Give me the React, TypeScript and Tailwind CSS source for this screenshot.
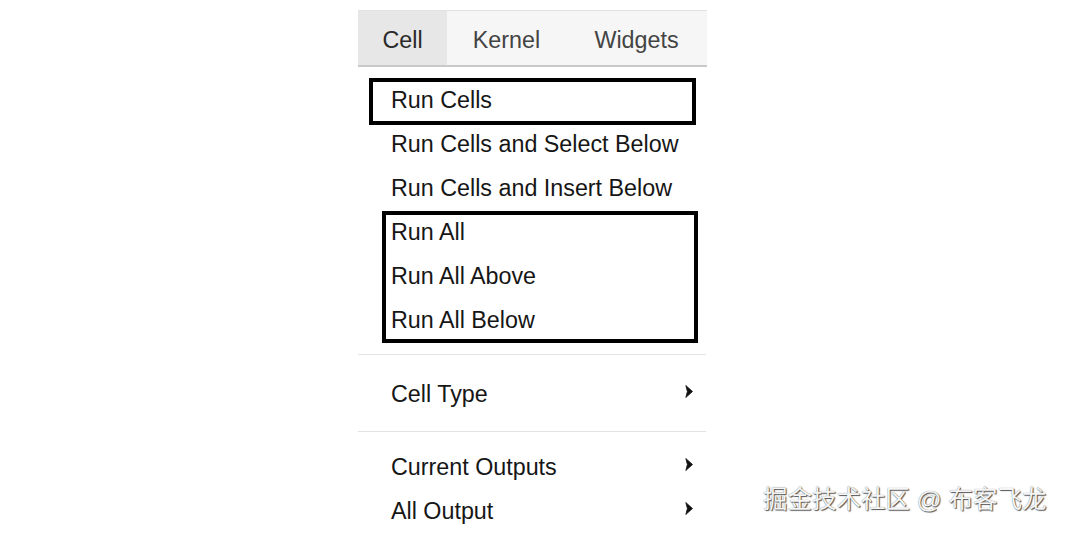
import React from 'react';

const FONT = { fontFamily: '"Liberation Sans", Arial, sans-serif' };

function Caret() {
  return (
    <svg width="8" height="13" viewBox="0 0 8 13" className="shrink-0 -mt-[5px]">
      <path d="M0.8 0.5 L7.5 6.5 L0.8 12.5 L2.4 6.5 Z" fill="#111" stroke="#111" strokeWidth="0.8" strokeLinejoin="round" />
    </svg>
  );
}

function Item({ label, sub, className = '' }: { label: string; sub?: boolean; className?: string }) {
  return (
    <div className={`h-[44px] flex items-center justify-between pl-[33px] pr-[14px] ${className}`}>
      <span>{label}</span>
      {sub && <Caret />}
    </div>
  );
}

export default function App() {
  return (
    <div className="w-[1066px] h-[534px] bg-white flex overflow-hidden text-[23.3px] text-[#161616]" style={FONT}>
      <div className="ml-[358px] mt-[10px] w-[349px] shrink-0 flex flex-col">
        {/* menu bar */}
        <div className="h-[57px] flex border-t border-[#e2e2e2] border-b-2 border-b-[#c9c9c9] bg-[#f6f6f6]">
          <div className="w-[89px] bg-[#e7e7e7] flex items-center justify-center pt-[4px] text-[#2a2a2a]">Cell</div>
          <div className="w-[119px] flex items-center justify-center pt-[4px] text-[#444]">Kernel</div>
          <div className="w-[141px] flex items-center justify-center pt-[4px] text-[#444]">Widgets</div>
        </div>

        <div className="pt-[11px]">
          <div className="ml-[11px] w-[327px] h-[47px] border-4 border-black flex items-center pl-[18px] pb-[3px]">
            Run Cells
          </div>
          <Item label="Run Cells and Select Below" className="-mt-[3px]" />
          <Item label="Run Cells and Insert Below" />
          <div className="mt-[1px] ml-[24px] w-[316px] h-[132px] border-4 border-black">
            <div className="-mt-[5px]">
              <div className="h-[44px] flex items-center pl-[5px]">Run All</div>
              <div className="h-[44px] flex items-center pl-[5px]">Run All Above</div>
              <div className="h-[44px] flex items-center pl-[5px]">Run All Below</div>
            </div>
          </div>
        </div>

        <div className="mt-[11px] h-px w-[348px] bg-[#e3e3e3]" />
        <Item label="Cell Type" sub className="mt-[17px]" />
        <div className="mt-[15px] h-px w-[348px] bg-[#e3e3e3]" />
        <Item label="Current Outputs" sub className="mt-[13px]" />
        <Item label="All Output" sub />
      </div>

      <div
        className="self-end ml-[56px] mb-[17px] text-[24.5px] leading-[34px] whitespace-nowrap text-[#f5f5f5] [text-shadow:1px_1px_1px_rgba(0,0,0,0.65),0_0_1px_rgba(0,0,0,0.55)]"
        style={{ fontFamily: '"Liberation Sans", "Noto Sans CJK SC", sans-serif' }}
      >
        掘金技术社区 @ 布客飞龙
      </div>
    </div>
  );
}
